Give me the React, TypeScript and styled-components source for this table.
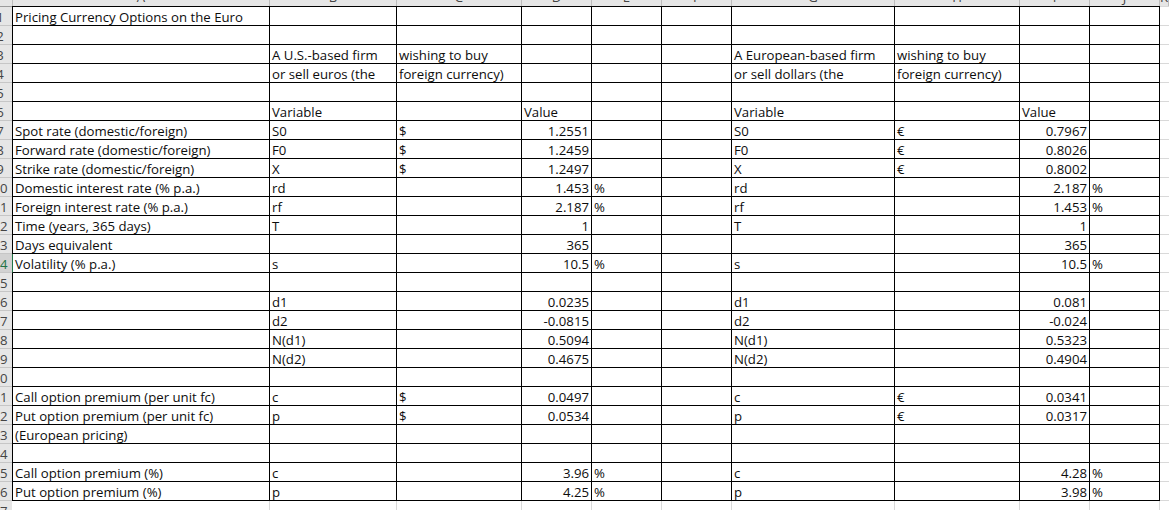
import React from "react";
import styled, { createGlobalStyle, css } from "styled-components";

const Global = createGlobalStyle`
  html, body { margin: 0; padding: 0; background: #ffffff; overflow: hidden; }
  #root { width: 1169px; height: 510px; overflow: hidden; }
`;

const COL_WIDTHS = [258, 127, 125, 70, 70, 70, 163, 125, 70, 70];
const LETTERS = ["A", "B", "C", "D", "E", "F", "G", "H", "I", "J", "K"];
const SELECTED_ROW = 14;

const E = "";
const ROWS: string[][] = [
  ["Pricing Currency Options on the Euro", E, E, E, E, E, E, E, E, E],
  [E, E, E, E, E, E, E, E, E, E],
  [E, "A U.S.-based firm", "wishing to buy", E, E, E, "A European-based firm", "wishing to buy", E, E],
  [E, "or sell euros (the", "foreign currency)", E, E, E, "or sell dollars (the", "foreign currency)", E, E],
  [E, E, E, E, E, E, E, E, E, E],
  [E, "Variable", E, "Value", E, E, "Variable", E, "Value", E],
  ["Spot rate (domestic/foreign)", "S0", "$", "1.2551", E, E, "S0", "€", "0.7967", E],
  ["Forward rate (domestic/foreign)", "F0", "$", "1.2459", E, E, "F0", "€", "0.8026", E],
  ["Strike rate (domestic/foreign)", "X", "$", "1.2497", E, E, "X", "€", "0.8002", E],
  ["Domestic interest rate (% p.a.)", "rd", E, "1.453", "%", E, "rd", E, "2.187", "%"],
  ["Foreign interest rate (% p.a.)", "rf", E, "2.187", "%", E, "rf", E, "1.453", "%"],
  ["Time (years, 365 days)", "T", E, "1", E, E, "T", E, "1", E],
  ["Days equivalent", E, E, "365", E, E, E, E, "365", E],
  ["Volatility (% p.a.)", "s", E, "10.5", "%", E, "s", E, "10.5", "%"],
  [E, E, E, E, E, E, E, E, E, E],
  [E, "d1", E, "0.0235", E, E, "d1", E, "0.081", E],
  [E, "d2", E, "-0.0815", E, E, "d2", E, "-0.024", E],
  [E, "N(d1)", E, "0.5094", E, E, "N(d1)", E, "0.5323", E],
  [E, "N(d2)", E, "0.4675", E, E, "N(d2)", E, "0.4904", E],
  [E, E, E, E, E, E, E, E, E, E],
  ["Call option premium (per unit fc)", "c", "$", "0.0497", E, E, "c", "€", "0.0341", E],
  ["Put option premium (per unit fc)", "p", "$", "0.0534", E, E, "p", "€", "0.0317", E],
  ["(European pricing)", E, E, E, E, E, E, E, E, E],
  [E, E, E, E, E, E, E, E, E, E],
  ["Call option premium (%)", "c", E, "3.96", "%", E, "c", E, "4.28", "%"],
  ["Put option premium (%)", "p", E, "4.25", "%", E, "p", E, "3.98", "%"],
];

const isNumber = (s: string) => /^-?[\d.]+$/.test(s);

const Sheet = styled.div`
  display: grid;
  grid-template-columns: 12px ${COL_WIDTHS.map((w) => `${w}px`).join(" ")} 1fr;
  grid-template-rows: 6px 20px repeat(26, 19px);
  width: 1169px;
  height: 510px;
  overflow: hidden;
  font-family: "Open Sans", "Liberation Sans", sans-serif;
  font-size: 13.2px;
  line-height: 16px;
  color: #0d0d0d;
  background: #ffffff;
`;

const Corner = styled.div`
  background: #e6e6e6;
`;

const ColHead = styled.div<{ $first?: boolean }>`
  background: #e6e6e6;
  border-right: 1px solid #bdbdbd;
  ${(p) => p.$first && css`border-left: 1px solid #bdbdbd;`}
  overflow: hidden;
  text-align: center;
  color: #444444;
`;

const ColLetter = styled.span`
  display: block;
  margin-top: -11px;
`;

const RowHead = styled.div<{ $selected?: boolean; $top?: boolean }>`
  background: ${(p) => (p.$selected ? "#d2d2d2" : "#e6e6e6")};
  color: ${(p) => (p.$selected ? "#217346" : "#444444")};
  border-bottom: 1px solid #c6c6c6;
  ${(p) => p.$top && css`border-top: 1px solid #9b9b9b;`}
  overflow: hidden;
  display: flex;
  align-items: flex-end;
`;

const RowNumber = styled.span`
  display: block;
  width: 24px;
  margin-left: -12px;
  flex: none;
  text-align: center;
`;

const Cell = styled.div<{
  $right?: boolean;
  $first?: boolean;
  $top?: boolean;
  $grid?: boolean;
  $selected?: boolean;
}>`
  display: flex;
  align-items: flex-end;
  justify-content: ${(p) => (p.$right ? "flex-end" : "flex-start")};
  padding: 0 2px 0 2px;
  white-space: nowrap;
  overflow: hidden;
  border-right: 1px solid ${(p) => (p.$grid ? "#d9d9d9" : "#000000")};
  border-bottom: 1px solid ${(p) => (p.$grid ? "#d9d9d9" : "#000000")};
  ${(p) =>
    p.$first &&
    css`
      border-left: 1px solid ${p.$selected ? "#217346" : "#000000"};
    `}
  ${(p) => p.$top && css`border-top: 1px solid #000000;`}
`;

const GridFill = styled.div<{ $top?: boolean }>`
  border-bottom: 1px solid #d9d9d9;
  ${(p) => p.$top && css`border-top: 1px solid #d9d9d9;`}
`;

export default function App() {
  return (
    <>
      <Global />
      <Sheet>
        <Corner />
        {LETTERS.map((l, i) => (
          <ColHead key={l} $first={i === 0}>
            <ColLetter>{l}</ColLetter>
          </ColHead>
        ))}
        {ROWS.map((row, r) => {
          const n = r + 1;
          const selected = n === SELECTED_ROW;
          return (
            <React.Fragment key={n}>
              <RowHead $selected={selected} $top={n === 1}>
                <RowNumber>{n}</RowNumber>
              </RowHead>
              {row.map((text, c) => (
                <Cell
                  key={c}
                  $first={c === 0}
                  $top={n === 1}
                  $selected={selected}
                  $right={isNumber(text)}
                >
                  {text}
                </Cell>
              ))}
              <GridFill $top={n === 1} />
            </React.Fragment>
          );
        })}
        <RowHead>
          <RowNumber>27</RowNumber>
        </RowHead>
        {COL_WIDTHS.map((_, c) => (
          <Cell key={c} $grid $first={false} />
        ))}
        <GridFill />
      </Sheet>
    </>
  );
}
